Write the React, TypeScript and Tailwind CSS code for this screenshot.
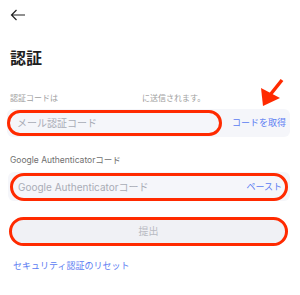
import { useState } from "react";

const font = { fontFamily: 'Inter, "Noto Sans CJK JP", sans-serif' };

const App = () => {
  const [emailCode, setEmailCode] = useState("");
  const [gaCode, setGaCode] = useState("");

  return (
    <div
      className="relative w-[300px] h-[295px] bg-white overflow-hidden font-['Inter','Noto_Sans_CJK_JP',sans-serif]"
      style={font}
    >
      {/* header */}
      <div className="h-[30px] flex items-center pl-[10px]">
        <svg width="16" height="12" viewBox="0 0 16 12" fill="none">
          <path d="M15 6H1.5M6.5 1L1.5 6L6.5 11" stroke="#222" strokeWidth="1.2" />
        </svg>
      </div>

      <h1 className="mt-[18px] pl-[10px] text-[16px] leading-[20px] font-bold text-[#1e1e1e]">認証</h1>

      {/* email code */}
      <div className="mt-[24px] pl-[10px] flex text-[8px] leading-[12px] text-[#a0a0a0]">
        <span className="w-[132px]">認証コードは</span>
        <span>に送信されます。</span>
      </div>
      <div className="mt-[5px] ml-[7px] mr-[10px] h-[28px] rounded-[6px] bg-[#f5f6fa] flex items-center">
        <div className="w-[215px] h-[26px] rounded-full border-[3px] border-[#ff2a00] flex items-center pl-[7px]">
          <input
            value={emailCode}
            onChange={(e) => setEmailCode(e.target.value)}
            placeholder="メール認証コード"
            className="w-full bg-transparent outline-none text-[10px] text-[#333] placeholder:text-[#a9acb6]"
          />
        </div>
        <button className="ml-[10px] text-[9px] text-[#5b7cf2]">コードを取得</button>
      </div>

      {/* google authenticator */}
      <div className="mt-[17px] pl-[10px] text-[8.5px] leading-[12px] text-[#6f6f6f]">Google Authenticatorコード</div>
      <div className="mt-[6px] ml-[8px] mr-[10px] h-[29px] rounded-[6px] bg-[#f5f6fa] px-[2px] pt-[1px]">
        <div className="h-[28px] rounded-full border-[3px] border-[#ff2a00] flex items-center pl-[5px] pr-[3px]">
          <input
            value={gaCode}
            onChange={(e) => setGaCode(e.target.value)}
            placeholder="Google Authenticatorコード"
            className="flex-1 bg-transparent outline-none text-[10px] text-[#333] placeholder:text-[#a9acb6]"
          />
          <button className="text-[9px] text-[#5b7cf2]">ペースト</button>
        </div>
      </div>

      {/* submit */}
      <button className="mt-[16px] ml-[9px] w-[279px] h-[29px] rounded-full border-[3px] border-[#ff2a00] bg-[#f0f1f5] text-[10px] text-[#b9bbc3] flex items-center justify-center">
        提出
      </button>

      <div className="mt-[14px] pl-[13px] text-[9px] leading-[12px] text-[#5b7cf2]">セキュリティ認証のリセット</div>

      {/* red annotation arrow */}
      <svg className="absolute left-0 top-0 pointer-events-none" width="300" height="295">
        <line x1="282" y1="80" x2="270" y2="95" stroke="#ff2a00" strokeWidth="3.5" />
        <polygon points="263,106 261,88 280,98" fill="#ff2a00" />
      </svg>
    </div>
  );
};

export default App;
